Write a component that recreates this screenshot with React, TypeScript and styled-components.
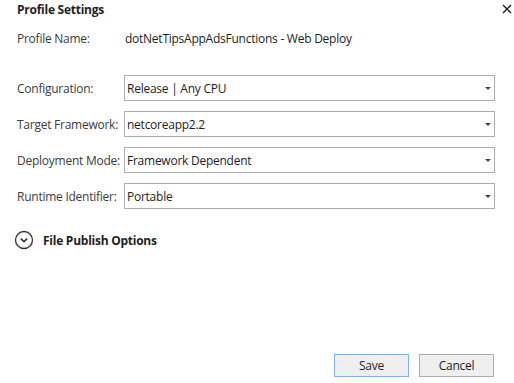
import { Fragment } from 'react'
import styled, { createGlobalStyle } from 'styled-components'

const Global = createGlobalStyle`
  body {
    margin: 0;
    background: #ffffff;
    font-family: "Open Sans", "Noto Sans", sans-serif;
  }
`

const Dialog = styled.div`
  width: 514px;
  height: 383px;
  box-sizing: border-box;
  padding: 0 19px 6px 17px;
  display: flex;
  flex-direction: column;
  color: #1e1e1e;
  font-size: 12px;
  letter-spacing: -0.25px;
`

const Header = styled.div`
  display: flex;
  align-items: center;
  justify-content: space-between;
  height: 18px;
`

const Title = styled.h1`
  margin: 0;
  font-size: 12px;
  font-weight: 700;
  color: #1e1e1e;
`

const Close = styled.button`
  border: none;
  background: none;
  padding: 0;
  margin-right: -17px;
  margin-top: -1px;
  width: 10px;
  height: 10px;
  display: flex;
  align-items: center;
  justify-content: center;
`

const Form = styled.div`
  display: flex;
  flex-direction: column;
  gap: 10px;
  margin-top: 7px;
`

const Row = styled.div<{ $first?: boolean }>`
  display: grid;
  grid-template-columns: 107px 1fr;
  align-items: center;
  height: 26px;
  margin-bottom: ${p => (p.$first ? '14px' : '0')};
`

const Label = styled.div`
  color: #3c3c3c;
  white-space: nowrap;
`

const Value = styled.div`
  padding-left: 1px;
`

const Select = styled.div`
  height: 26px;
  box-sizing: border-box;
  border: 1px solid #abadb3;
  display: flex;
  align-items: center;
  justify-content: space-between;
  padding: 0 3px 0 2px;
  background: #ffffff;
`

const Arrow = styled.span`
  width: 0;
  height: 0;
  border-left: 3px solid transparent;
  border-right: 3px solid transparent;
  border-top: 3px solid #444;
`

const Expander = styled.div`
  display: flex;
  align-items: center;
  gap: 9px;
  margin-top: 21px;
  margin-left: -3px;
  height: 20px;
  font-weight: 700;
  color: #1e1e1e;
`

const Footer = styled.div`
  margin-top: auto;
  display: flex;
  justify-content: flex-end;
  gap: 10px;
  margin-right: 1px;
`

const Button = styled.button<{ $primary?: boolean }>`
  width: 75px;
  height: 23px;
  box-sizing: border-box;
  background: #efefef;
  border: 1px solid ${p => (p.$primary ? '#7eb4ea' : '#adadad')};
  font-family: inherit;
  font-size: 12px;
  letter-spacing: inherit;
  color: #1e1e1e;
  padding: 0;
`

const rows = [
  ['Configuration:', 'Release | Any CPU'],
  ['Target Framework:', 'netcoreapp2.2'],
  ['Deployment Mode:', 'Framework Dependent'],
  ['Runtime Identifier:', 'Portable'],
]

export default function App() {
  return (
    <>
      <Global />
      <Dialog>
        <Header>
          <Title>Profile Settings</Title>
          <Close aria-label="Close">
            <svg width="10" height="10" viewBox="0 0 10 10">
              <path d="M1 1 L9 9 M9 1 L1 9" stroke="#1e1e1e" strokeWidth="1.4" />
            </svg>
          </Close>
        </Header>
        <Form>
          <Row $first>
            <Label>Profile Name:</Label>
            <Value>dotNetTipsAppAdsFunctions - Web Deploy</Value>
          </Row>
          {rows.map(([label, value]) => (
            <Fragment key={label}>
              <Row>
                <Label>{label}</Label>
                <Select>
                  <span>{value}</span>
                  <Arrow />
                </Select>
              </Row>
            </Fragment>
          ))}
        </Form>
        <Expander>
          <svg width="20" height="20" viewBox="0 0 20 20">
            <circle cx="10" cy="10" r="8.5" fill="none" stroke="#333" strokeWidth="1.3" />
            <path d="M6.8 8.6 L10 11.6 L13.2 8.6" fill="none" stroke="#333" strokeWidth="1.5" />
          </svg>
          File Publish Options
        </Expander>
        <Footer>
          <Button $primary>Save</Button>
          <Button>Cancel</Button>
        </Footer>
      </Dialog>
    </>
  )
}
